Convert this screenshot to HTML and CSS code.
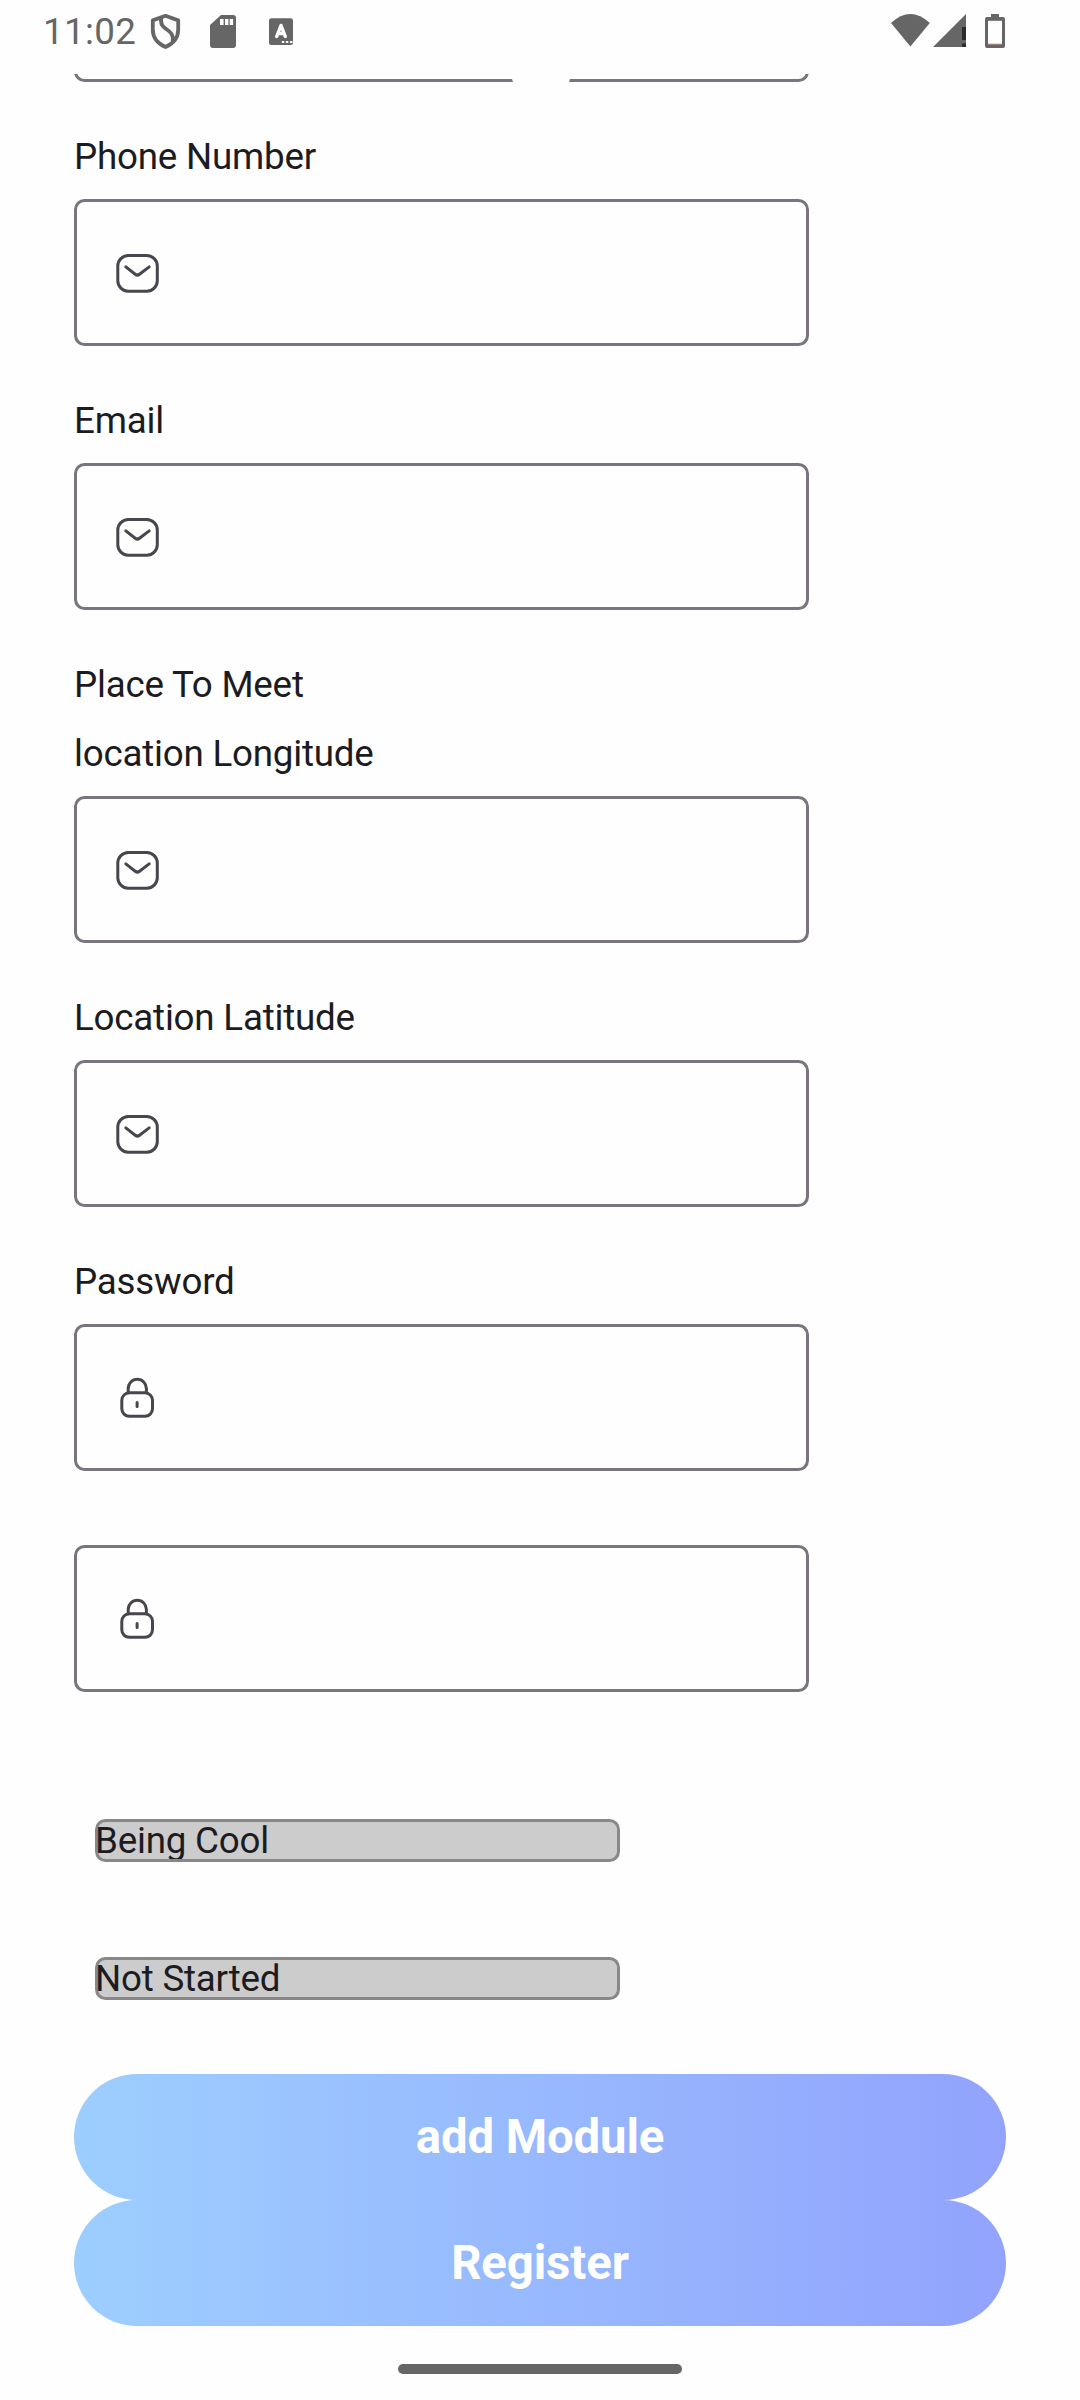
FILE: index.html
```html
<!DOCTYPE html>
<html lang="en">
<head>
<meta charset="utf-8">
<title>Register</title>
<link rel="stylesheet" href="styles.css">
</head>
<body>
<svg class="defs" width="0" height="0" aria-hidden="true">
  <symbol id="mail" viewBox="0 0 63 63">
    <rect x="11.8" y="14.6" width="39.5" height="35.6" rx="10.5"/>
    <path d="M19.8 25.9L29.2 33.3Q31.3 35 33.5 33.3L43.2 25.9"/>
  </symbol>
  <symbol id="lock" viewBox="0 0 63 63">
    <rect x="15.8" y="26.8" width="30.7" height="23.5" rx="7.5"/>
    <path d="M22.2 26.8V22.4A9 9 0 0 1 40.4 22.4V26.8M31.1 36.6V40.6"/>
  </symbol>
</svg>
<div class="screen">
  <header class="status">
    <span class="clock">11:02</span>
    <svg class="status-left" width="150" height="40" viewBox="0 0 150 40">
      <path class="line" d="M15.5 3.8L28.2 8.4V17.5Q28.2 29.5 15.5 35Q2.8 29.5 2.8 17.5V8.4Z"/>
      <path class="line" d="M11.3 5.5C8.5 20 25 15 22.6 29.5"/>
      <path d="M71 3H83Q86 3 86 6V33Q86 36 83 36H63Q60 36 60 33V13Z"/>
      <path class="paper" d="M70 7h3.6v6H70zM75 7h3.4v6H75zM79.7 7h3.4v6h-3.4z"/>
      <rect x="119" y="6.3" width="24" height="26.6" rx="2.5"/>
      <path class="letter" d="M126.7 24.5L131 13.4L135.3 24.5M128.6 21.5H133.6"/>
      <path class="paper" d="M131.8 29h2.4v2h-2.4zM135.9 29h2.4v2h-2.4zM140 29h2.4v2H140z"/>
    </svg>
    <svg class="status-right" width="120" height="40" viewBox="0 0 120 40">
      <path d="M1 11Q20.3 -7 39.8 11L20.4 34.5Z"/>
      <path d="M43 35L76 2V35Z"/>
      <path class="alert" d="M72 15h4v13h-4zM72 31.5h4V35h-4z"/>
      <path d="M101 2h8v3h4q2 0 2 2v27q0 2-2 2H97q-2 0-2-2V7q0-2 2-2h4z"/>
      <rect class="paper" x="98" y="8.8" width="14" height="23.2"/>
      <rect class="low" x="98" y="31.7" width="14" height="1"/>
    </svg>
  </header>
  <main class="form">
    <div class="cut"><div class="box"></div><i class="notch"></i></div>
    <label class="label">Phone Number</label>
    <div class="box"><svg class="icon"><use href="#mail"/></svg></div>
    <label class="label">Email</label>
    <div class="box"><svg class="icon"><use href="#mail"/></svg></div>
    <label class="label">Place To Meet</label>
    <label class="label next">location Longitude</label>
    <div class="box"><svg class="icon"><use href="#mail"/></svg></div>
    <label class="label">Location Latitude</label>
    <div class="box"><svg class="icon"><use href="#mail"/></svg></div>
    <label class="label">Password</label>
    <div class="box"><svg class="icon"><use href="#lock"/></svg></div>
    <div class="box confirm"><svg class="icon"><use href="#lock"/></svg></div>
    <div class="choices">
      <div class="choice"><span>Being Cool</span></div>
      <div class="choice"><span>Not Started</span></div>
    </div>
    <button class="button">add Module</button>
    <button class="button">Register</button>
  </main>
  <div class="handle"></div>
</div>
</body>
</html>
```
FILE: styles.css
```css
* { box-sizing: border-box; }
body { margin: 0; background: #fefefe; }
.defs { display: block; }
.screen {
  width: 1080px;
  height: 2400px;
  overflow: hidden;
  background: #fefefe;
  color: #1c1b1f;
  font-family: Roboto, "Liberation Sans", sans-serif;
  font-size: 36.75px;
  line-height: 53px;
  letter-spacing: -0.22px;
}
.status {
  display: flex;
  height: 74px;
  padding: 12px 72px 0 43px;
  fill: #666;
  color: #666;
}
.clock { width: 107px; line-height: 39px; letter-spacing: 0.35px; white-space: nowrap; }
.status-right { margin-left: auto; margin-right: -2px; }
.line { fill: none; stroke: #666; stroke-width: 3.8; stroke-linejoin: round; }
.letter { fill: none; stroke: #fefefe; stroke-width: 3.4; stroke-linecap: round; stroke-linejoin: round; }
.paper { fill: #fefefe; }
.alert { fill: #2b2b2b; }
.low { fill: #b9877e; }

.form { display: flex; flex-direction: column; padding: 0 74px; }
.cut {
  position: relative;
  display: flex;
  flex-direction: column;
  justify-content: flex-end;
  width: 735px;
  height: 8px;
  overflow: hidden;
}
.notch {
  position: absolute;
  left: 438px;
  bottom: 0;
  width: 58px;
  height: 3px;
  background: #fefefe;
  clip-path: polygon(0 0, 100% 0, 57px 100%, 1px 100%);
}
.label { height: 53px; margin: 48px 0 16px; white-space: nowrap; }
.label.next { margin-top: 0; }
.box {
  display: flex;
  flex: none;
  align-items: center;
  width: 735px;
  height: 147px;
  padding-left: 29px;
  border: 3px solid #79747e;
  border-radius: 10.5px;
}
.confirm { margin-top: 74px; }
.icon {
  width: 63px;
  height: 63px;
  fill: none;
  stroke: #49454f;
  stroke-width: 3;
  stroke-linecap: round;
  stroke-linejoin: round;
}
.choices { display: grid; gap: 95px; padding: 127px 0 74px 21px; }
.choice {
  width: 525px;
  height: 43px;
  border: 3px solid #888;
  border-radius: 10.5px;
  background: #ccc;
}
.choice span {
  display: block;
  height: 37px;
  margin-left: -3px;
  line-height: 37px;
  clip-path: inset(0);
}
.button {
  height: 126px;
  padding: 0;
  border: 0;
  border-radius: 63px;
  background: linear-gradient(90deg, #9dceff, #92a3fd);
  color: #fff;
  font: 700 47.25px/126px Roboto, "Liberation Sans", sans-serif;
  letter-spacing: -0.08px;
}
.handle { width: 284px; height: 10px; margin: 38px auto 0; border-radius: 5px; background: #666; }
```
